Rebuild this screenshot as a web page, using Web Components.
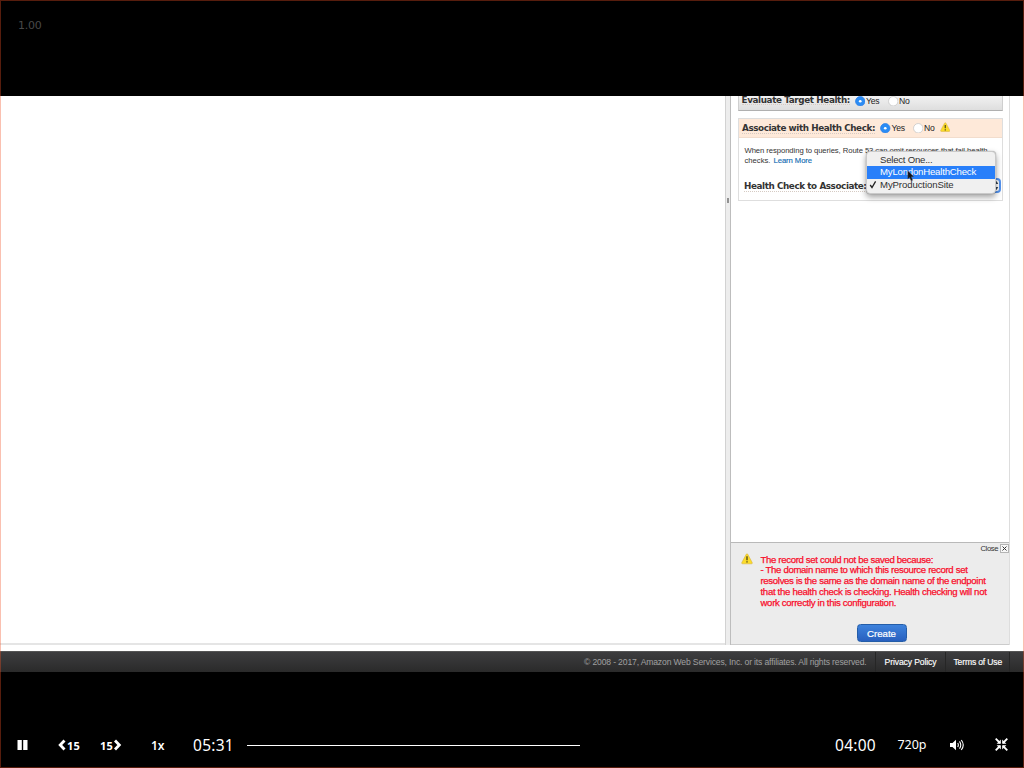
<!DOCTYPE html>
<html lang="en"><head><meta charset="utf-8"><title>Video player</title>
<style>html,body{margin:0;background:#000;overflow:hidden}</style></head>
<body><video-player></video-player>
<script>
const define=(name,css,html)=>customElements.define(name,class extends HTMLElement{
  constructor(){super();this.attachShadow({mode:'open'}).innerHTML='<style>*{box-sizing:border-box}'+css+'</style>'+html;}
});

/* One line of text, tracked so that it fills the width given in "w". */
customElements.define('line-text',class extends HTMLElement{
  constructor(){super();this.attachShadow({mode:'open'}).innerHTML='<style>:host{display:block;white-space:nowrap;flex:none}span{display:inline-block}</style><span><slot></slot></span>';}
  connectedCallback(){
    const w=+this.getAttribute('w'),s=this.shadowRoot.querySelector('span');
    this.style.width=w+'px';
    requestAnimationFrame(()=>this.fit(w,s));this.fit(w,s);
  }
  fit(w,s){
    s.style.letterSpacing='0px';
    const n=this.textContent.length,now=s.getBoundingClientRect().width;
    if(now)s.style.letterSpacing=((w-now)/n).toFixed(3)+'px';
  }
});

define('warn-icon',':host{display:block;width:12px;height:12px;flex:none}svg{display:block;width:100%;height:100%}',
`<svg viewBox="0 0 12 12"><path d="M6 .8Q6.6.8 7 1.7L11.2 9.6Q11.6 10.8 10.4 10.8H1.6Q.4 10.8.8 9.6L5 1.7Q5.4.8 6 .8Z" fill="#fbdc2a" stroke="#d9b13b" stroke-width=".6"/><path d="M6 3.3V7.2M6 8.2V9.6" stroke="#4b4218" stroke-width="1.3"/></svg>`);

define('radio-option',`:host{display:flex;align-items:center;gap:1px;font:8.6px/10px "Liberation Sans",Arial,sans-serif;color:#222}
svg{display:block;width:10.5px;height:10.5px;flex:none}circle{fill:#fff;stroke:#c4c4c4;stroke-width:.7}.dot{stroke:none}
:host([on]) .ring{fill:#2b8cf4;stroke:#2b7fe8}`,`<svg viewBox="0 0 10 10"><circle class="ring" cx="5" cy="5" r="4.5"/><circle class="dot" cx="5" cy="5" r="1.3"/></svg><slot></slot>`);

define('choice-menu',`:host{display:block;width:130px;height:43px;padding:2.5px 0;background:#f0f0f0;border:.5px solid #c9c9c9;border-radius:4px;box-shadow:0 3px 6px rgba(0,0,0,.38),0 0 1px rgba(0,0,0,.4);font:9.6px/12.5px "Liberation Sans",Arial,sans-serif;color:#303030;position:relative}
div{height:12.4px;padding-left:13.5px;position:relative}.hot{background:#287ffa;color:#fff}
.tick{position:absolute;left:2.5px;top:1px;width:8px;height:9px}.cursor{position:absolute;left:40px;top:18.5px;width:7.5px;height:12px}`,
`<div><line-text w="52.5">Select One...</line-text></div><div class="hot"><line-text w="96">MyLondonHealthCheck</line-text></div><div><svg class="tick" viewBox="0 0 8 9"><path d="M1.2 5L3 7.5L6.6 1.4" fill="none" stroke="#222" stroke-width="1.3"/></svg><line-text w="73.5">MyProductionSite</line-text></div>
<svg class="cursor" viewBox="0 0 8 13"><path d="M.8.8V9.8L2.8 8L4.4 11.8L6.1 11.1L4.6 7.4H7.3Z" fill="#151515" stroke="#667" stroke-width=".4"/></svg>`);

define('health-panel',`:host{display:block;padding:0 6px 0 7px;background:#fff;font:bold 9px/10px "DejaVu Sans",Verdana,sans-serif;color:#333}
.bar{width:265px;height:14.5px;margin-bottom:7.5px;background:linear-gradient(#f1f1f1,#dedede);border:solid #cfcfcf;border-width:0 1px 1.5px;border-bottom-color:#b0b0b0;display:flex;padding-left:2.5px;align-items:flex-start}
.lab{font:bold 8.8px/10px "DejaVu Sans",Verdana,sans-serif;border-bottom:1px dotted #d6cbc3}.bar radio-option{margin-top:-.5px}
.card{width:265px;height:83px;border:1px solid #dedede}.head{height:19px;background:#fee9d9;border-bottom:1px solid #f2ddcd;display:flex;align-items:center;padding-left:3px}
p{margin:0;padding:7.5px 0 0 5.5px;font:7.7px/10.5px "Liberation Sans",Arial,sans-serif;color:#333}.l2{display:flex}.link{color:#146eb4;margin-left:3px;-webkit-text-stroke:.15px}
.field{position:relative;display:flex;align-items:center;height:16px;margin-top:11.5px;padding-left:5px}
.sel{width:134px;height:15px;position:absolute;right:0;top:-.5px;margin-right:1px;border:2px solid #5594ef;border-radius:4px;background:#fff;display:flex;justify-content:flex-end}
.sel svg{width:5px;height:11px}choice-menu{position:absolute;left:126.5px;top:-27.5px}`,
`<div class="bar"><line-text class="lab" w="108.5" style="line-height:8px">Evaluate Target Health:</line-text><radio-option on style="margin-left:4.5px"><line-text w="13.5">Yes</line-text></radio-option><radio-option style="margin-left:8px"><line-text w="10.5">No</line-text></radio-option></div>
<div class="card"><div class="head"><line-text class="lab" w="133">Associate with Health Check:</line-text><radio-option on style="margin-left:5px"><line-text w="13.5">Yes</line-text></radio-option><radio-option style="margin-left:7.5px"><line-text w="10.5">No</line-text></radio-option><warn-icon style="margin:-2px 0 0 5px;width:10.5px;height:10.5px"></warn-icon></div>
<p><line-text w="243">When responding to queries, Route 53 can omit resources that fail health</line-text><span class="l2"><line-text w="26">checks.</line-text><line-text class="link" w="38.5">Learn More</line-text></span></p>
<div class="field"><line-text class="lab" w="122.5">Health Check to Associate:</line-text><div class="sel"><svg viewBox="0 0 5 11"><path d="M2.5 1L4.3 4H.7ZM2.5 10L4.3 7H.7Z" fill="#345"/></svg></div><choice-menu></choice-menu></div></div>`);

define('error-panel',`:host{display:block;height:103px;background:#ececec;border-top:1px solid #b9b9b9;border-bottom:1px solid #ccc;font:9.6px/10.9px "Liberation Sans",Arial,sans-serif;color:#f80d2a}
.close{height:10px;display:flex;justify-content:flex-end;align-items:center;gap:2px;font-size:7.7px;line-height:9px;color:#333}
.x{width:9px;height:9px;border:1px solid #b4b4b4;background:#f8f8f8;display:block}.x svg{display:block}
.msg{display:flex;gap:8px;padding-left:9.5px}.txt{padding-top:1.5px;-webkit-text-stroke:.25px}
button{display:block;margin:14.8px 0 0 125.5px;width:50px;height:18px;padding:0 0 0 9.5px;border:1px solid #245da8;border-radius:3.5px;background:linear-gradient(#3d82dc,#2860bf);color:#fff;font:9.7px/17px "Liberation Sans",Arial,sans-serif;text-align:left;-webkit-text-stroke:.2px}`,
`<div class="close"><line-text w="17.5">Close</line-text><span class="x"><svg width="7" height="7" viewBox="0 0 7 7"><path d="M1.5 1.5L5.5 5.5M5.5 1.5L1.5 5.5" stroke="#333"/></svg></span></div>
<div class="msg"><warn-icon></warn-icon><div class="txt"><line-text w="172.5">The record set could not be saved because:</line-text><line-text w="207">- The domain name to which this resource record set</line-text><line-text w="225">resolves is the same as the domain name of the endpoint</line-text><line-text w="226">that the health check is checking. Health checking will not</line-text><line-text w="135.5">work correctly in this configuration.</line-text></div></div>
<button><line-text w="29">Create</line-text></button>`);

define('page-footer',`:host{display:flex;justify-content:flex-end;height:21px;border-top:1px solid #555;background:linear-gradient(#3d3d3f,#2a2a2a);font:8.6px/20px "Liberation Sans",Arial,sans-serif;color:#a0a0a0;padding-right:14.5px}
line-text{display:block}.c{margin-right:8px}.a{color:#fff;border-left:1px solid #262626;padding-left:9px;-webkit-text-stroke:.15px}.a:last-child{border-right:1px solid #262626}`,
`<line-text class="c" w="282.5">© 2008 - 2017, Amazon Web Services, Inc. or its affiliates. All rights reserved.</line-text><div class="a" style="width:70px"><line-text w="52">Privacy Policy</line-text></div><div class="a" style="width:65px;padding-left:8px"><line-text w="48.5">Terms of Use</line-text></div>`);

define('console-page',`:host{display:flex;flex-direction:column;height:576px;background:#fff}
main{height:549px;margin-bottom:6px;display:grid;grid-template-columns:724.5px 6.5px 279px;flex:none}
.list{border-bottom:2px solid #e5e5e5}.split{background:#ededed;border-left:1px solid #d2d2d2;border-right:1px solid #bdbdbd;display:flex;justify-content:center;padding-top:102px}
.split i{width:2.5px;height:5px;background:#929292}.side{display:flex;flex-direction:column;justify-content:space-between;border-right:1px solid #ddd}`,
`<main><div class="list"></div><div class="split"><i></i></div><div class="side"><health-panel></health-panel><error-panel></error-panel></div></main><page-footer></page-footer>`);

define('player-controls',`:host{display:flex;align-items:center;height:46px;margin-top:50px;padding-left:17px;color:#fff;font:15.5px/20px "Noto Sans","Open Sans",sans-serif}
svg{display:block;flex:none}.skip{display:flex;align-items:center;gap:1px;font-weight:bold;font-size:11px}.skip line-text{position:relative;top:1px}
.track{width:333px;height:1px;background:#fff;margin-left:13px}`,
`<svg width="11" height="10" viewBox="0 0 11 10"><path d="M.5 0H4.8V10H.5ZM6.2 0H10.5V10H6.2Z" fill="#fff"/></svg>
<div class="skip" style="margin-left:30px"><svg width="8" height="12" viewBox="0 0 8 12"><path d="M6.5 1.5L2.2 6L6.5 10.5" fill="none" stroke="#fff" stroke-width="2.8"/></svg><line-text w="13">15</line-text></div>
<div class="skip" style="margin-left:20px"><line-text w="13">15</line-text><svg width="8" height="12" viewBox="0 0 8 12"><path d="M1 1.5L5.3 6L1 10.5" fill="none" stroke="#fff" stroke-width="2.8"/></svg></div>
<line-text w="13.5" style="margin-left:29px;font-size:12px;font-weight:600;position:relative;top:.6px">1x</line-text>
<line-text w="41" style="margin-left:28.5px">05:31</line-text><div class="track"></div>
<line-text w="41" style="margin-left:255px">04:00</line-text><line-text w="29" style="margin-left:21.5px;font-size:12.5px">720p</line-text>
<svg style="margin-left:23.5px" width="15" height="12" viewBox="0 0 15 12"><path d="M0 4H2.5L6 .8V11.2L2.5 8H0Z" fill="#fff"/><path d="M7.7 4Q9 6 7.7 8M9.5 2.4Q12 6 9.5 9.6M11.3 1Q15.2 6 11.3 11" fill="none" stroke="#fff" stroke-width="1.1"/></svg>
<svg style="margin-left:30px;margin-top:-1px" width="13" height="13" viewBox="0 0 13 13"><path d="M.7.7L5 5M12.3.7L8 5M.7 12.3L5 8M12.3 12.3L8 8" stroke="#fff" stroke-width="1.8"/><path d="M5.8 1.6V5.8H1.6ZM7.2 1.6V5.8H11.4ZM5.8 11.4V7.2H1.6ZM7.2 11.4V7.2H11.4Z" fill="#fff"/></svg>`);

define('video-player',`:host{display:block;position:relative;width:1024px;height:768px;background:#000;overflow:hidden}
header{height:96px;padding:19px 18px;font:11px/14px "DejaVu Sans",sans-serif;color:#484848}
.frame{position:absolute;inset:0;border:1px solid rgba(240,80,35,.36);pointer-events:none}`,
`<header><line-text w="23.5">1.00</line-text></header><console-page></console-page><player-controls></player-controls><div class="frame"></div>`);
</script></body></html>
